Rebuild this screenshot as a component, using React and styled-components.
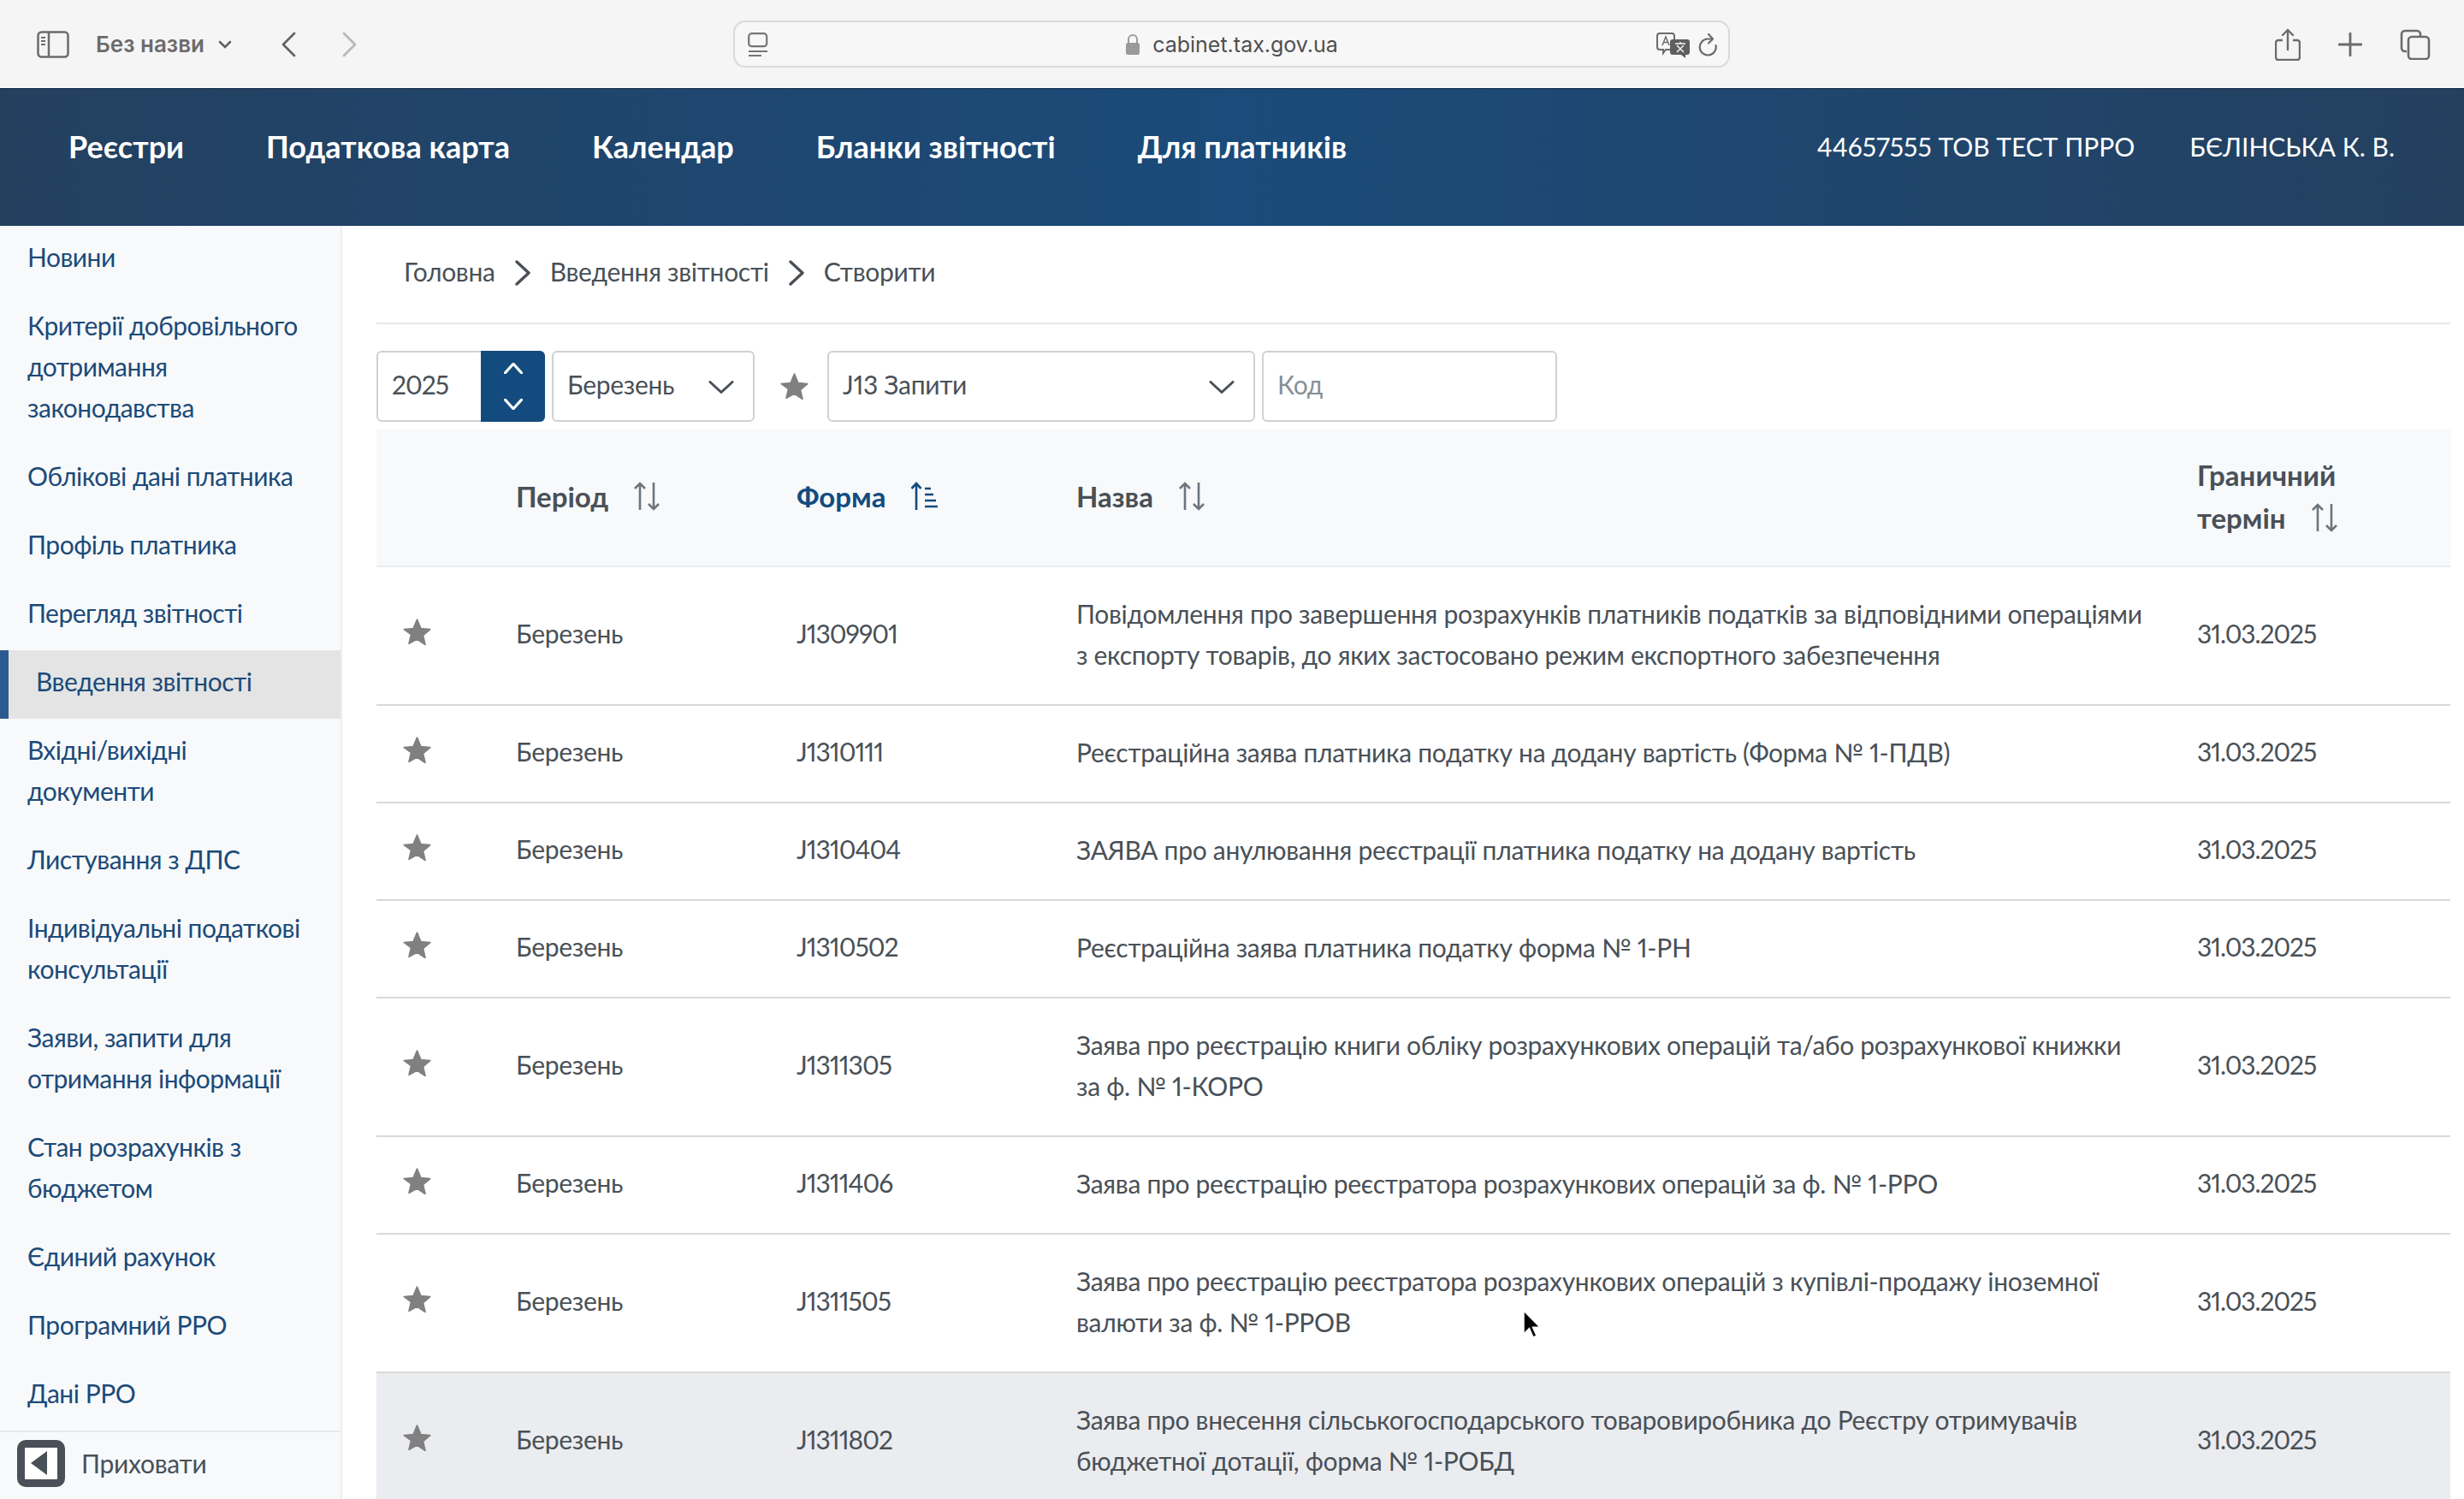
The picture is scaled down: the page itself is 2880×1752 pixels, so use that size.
import React from 'react';
import styled, { createGlobalStyle } from 'styled-components';

const GlobalStyle = createGlobalStyle`
  html, body {
    margin: 0;
    padding: 0;
    background: #fff;
  }
  body {
    font-family: Lato, "Noto Sans", sans-serif;
    color: #495057;
    font-variant-numeric: proportional-nums;
  }
`;

const menuItems = [
  ['Новини'],
  ['Критерії добровільного', 'дотримання', 'законодавства'],
  ['Облікові дані платника'],
  ['Профіль платника'],
  ['Перегляд звітності'],
  ['Введення звітності'],
  ['Вхідні/вихідні', 'документи'],
  ['Листування з ДПС'],
  ['Індивідуальні податкові', 'консультації'],
  ['Заяви, запити для', 'отримання інформації'],
  ['Стан розрахунків з', 'бюджетом'],
  ['Єдиний рахунок'],
  ['Програмний РРО'],
  ['Дані РРО'],
];

const rows = [
  { code: 'J1309901', name: ['Повідомлення про завершення розрахунків платників податків за відповідними операціями', 'з експорту товарів, до яких застосовано режим експортного забезпечення'] },
  { code: 'J1310111', name: ['Реєстраційна заява платника податку на додану вартість (Форма № 1-ПДВ)'] },
  { code: 'J1310404', name: ['ЗАЯВА про анулювання реєстрації платника податку на додану вартість'] },
  { code: 'J1310502', name: ['Реєстраційна заява платника податку форма № 1-РН'] },
  { code: 'J1311305', name: ['Заява про реєстрацію книги обліку розрахункових операцій та/або розрахункової книжки', 'за ф. № 1-КОРО'] },
  { code: 'J1311406', name: ['Заява про реєстрацію реєстратора розрахункових операцій за ф. № 1-РРО'] },
  { code: 'J1311505', name: ['Заява про реєстрацію реєстратора розрахункових операцій з купівлі-продажу іноземної', 'валюти за ф. № 1-РРОВ'] },
  { code: 'J1311802', name: ['Заява про внесення сільськогосподарського товаровиробника до Реєстру отримувачів', 'бюджетної дотації, форма № 1-РОБД'], hovered: true },
];

const Star = ({ className }) => (
  <svg className={className} viewBox="1 1 30 28.500" width="33" height="31">
    <path d="M16 2l4 9.600 10 .9-7.600 6.600 2.300 9.900L16 23l-8.700 5 2.300-9.900L2 12.500l10-.9z" fill="#808080" stroke="#808080" strokeWidth="1.600" strokeLinejoin="round" />
  </svg>
);

const Chevron = ({ up, width = 30, height = 15, color = '#495057', stroke = 3 }) => (
  <svg viewBox="0 0 30 15" width={width} height={height} preserveAspectRatio="none">
    <path d={up ? 'M2 13.500L15 1.500l13 12' : 'M2 1.500l13 12 13-12'} fill="none" stroke={color} strokeWidth={stroke} strokeLinecap="round" strokeLinejoin="round" />
  </svg>
);

const SortIcon = ({ active }) => (
  <svg viewBox="0 0 32 34" width="32" height="34">
    {active ? (
      <g fill="none" stroke="#134b7f" strokeWidth="2.600">
        <path d="M7 33V2M1.500 8L7 2l5.500 6" />
        <path d="M17 8h7M17 15h10M17 22h13M17 29h15" strokeWidth="2.400" />
      </g>
    ) : (
      <g fill="none" stroke="#6c757d" strokeWidth="2.600">
        <path d="M8 33V2M2 8l6-6 6 6" />
        <path d="M24 1v31M18 26l6 6 6-6" />
      </g>
    )}
  </svg>
);

const Page = styled.div`
  position: relative;
  width: 2880px;
  height: 1752px;
  overflow: hidden;
`;

const BrowserBar = styled.div`
  position: relative;
  display: flex;
  align-items: center;
  height: 103px;
  padding-left: 43px;
  background: #f5f5f6;
  border-bottom: 1px solid #0a2340;
`;

const TabTitle = styled.span`
  margin-left: 31px;
  font-family: Inter, "Liberation Sans", sans-serif;
  font-size: 26px;
  font-weight: 600;
  color: #6b6b6b;
`;

const BarButton = styled.span`
  display: flex;
  margin-left: ${props => props.$gap}px;
`;

const UrlBox = styled.div`
  position: absolute;
  left: 857px;
  top: 24px;
  box-sizing: border-box;
  width: 1165px;
  height: 55px;
  display: flex;
  align-items: center;
  justify-content: center;
  border: 2px solid #d9d9d9;
  border-radius: 14px;
  background: #f7f7f8;
`;

const UrlText = styled.span`
  margin-left: 14px;
  font-family: Inter, "Liberation Sans", sans-serif;
  font-size: 25px;
  color: #4f4f4f;
`;

const UrlSide = styled.span`
  position: absolute;
  top: 12px;
  left: ${props => props.$left}px;
  display: flex;
`;

const BarRight = styled.div`
  display: flex;
  align-items: center;
  margin-left: auto;
  padding-right: 39px;
  gap: 44px;
`;

const Header = styled.header`
  display: flex;
  align-items: center;
  justify-content: space-between;
  box-sizing: border-box;
  height: 160px;
  padding: 0 81px 26px 80px;
  background: linear-gradient(90deg, #24405f 0%, #1b4b7a 50%, #24405f 100%);
`;

const Nav = styled.nav`
  display: flex;
  gap: 96px;
`;

const NavLink = styled.a`
  font-size: 36px;
  font-weight: 700;
  color: #fff;
`;

const UserBlock = styled.div`
  display: flex;
  gap: 64px;
  font-size: 30px;
  color: #fff;
`;

const Main = styled.div`
  display: grid;
  grid-template-columns: 400px 1fr;
  height: 1488px;
  font-size: 30px;
  letter-spacing: -0.3px;
`;

const Sidebar = styled.aside`
  position: relative;
  box-sizing: border-box;
  height: 1488px;
  background: #f7f9fb;
  border-right: 2px solid #eceef0;
`;

const MenuItem = styled.a`
  display: block;
  box-sizing: border-box;
  padding: 12px 20px 20px 32px;
  line-height: 48px;
  letter-spacing: -0.5px;
  color: #1c4a78;
  white-space: nowrap;
  ${props => props.$active && `
    background: #e4e4e4;
    border-left: 10px solid #2a5a8f;
  `}
`;

const HideRow = styled.div`
  position: absolute;
  left: 0;
  right: 0;
  top: 1408px;
  height: 80px;
  display: flex;
  align-items: center;
  box-sizing: border-box;
  padding: 0 0 6px 20px;
  gap: 19px;
  color: #495057;
  background: #f7f9fb;
  border-top: 2px solid #e6e8ea;
`;

const HideIcon = styled.span`
  position: relative;
  box-sizing: border-box;
  width: 56px;
  height: 55px;
  border: 9px solid #495057;
  border-radius: 10px;
  background: #fff;
  &::after {
    content: '';
    position: absolute;
    left: 7px;
    top: 4px;
    border-style: solid;
    border-width: 14px 19px 14px 0;
    border-color: transparent #495057 transparent transparent;
  }
`;

const Content = styled.main`
  padding: 0 16px 0 40px;
`;

const Breadcrumbs = styled.div`
  display: flex;
  align-items: center;
  box-sizing: border-box;
  height: 115px;
  padding: 0 0 8px 32px;
  gap: 22px;
  border-bottom: 2px solid #e8e8e8;
`;

const CrumbArrow = styled.svg`
  margin-top: 5px;
`;

const Filters = styled.div`
  display: flex;
  align-items: stretch;
  height: 83px;
  margin-top: 31px;
`;

const Field = styled.div`
  position: relative;
  display: flex;
  align-items: center;
  box-sizing: border-box;
  width: ${props => props.$width}px;
  margin-right: ${props => props.$gap ?? 8}px;
  padding: 0 0 6px 16px;
  color: ${props => (props.$placeholder ? '#868e96' : '#495057')};
  background: #fff;
  border: 2px solid #ced1d6;
  border-radius: 6px;
`;

const YearText = styled.span`
  letter-spacing: -1px;
`;

const Spinner = styled.div`
  position: absolute;
  top: -2px;
  right: -2px;
  bottom: -2px;
  width: 75px;
  display: flex;
  flex-direction: column;
  align-items: center;
  justify-content: space-between;
  padding: 14px 0;
  box-sizing: border-box;
  background: #134b7f;
  border-radius: 0 6px 6px 0;
`;

const SelectArrow = styled.span`
  position: absolute;
  right: 22px;
  top: 33px;
  display: flex;
`;

const FavStar = styled.span`
  display: flex;
  align-items: center;
  width: 85px;
  padding-left: 30px;
  box-sizing: border-box;
`;

const Grid = styled.div`
  display: grid;
  grid-template-columns: 163px 328px 327px 1310px 1fr;
  align-items: center;
  box-sizing: border-box;
  height: ${props => props.$height}px;
  padding-bottom: 6px;
  background: ${props => (props.$hovered ? '#ebecef' : '#fff')};
  border-bottom: 2px solid #d9d9d9;
`;

const HeadRow = styled(Grid)`
  margin-top: 9px;
  padding-bottom: 4px;
  background: #f7f9fb;
  border-bottom-color: #e9ecef;
  font-size: 33px;
  letter-spacing: 0;
  font-weight: 700;
`;

const HeadCell = styled.div`
  display: flex;
  align-items: center;
  gap: 29px;
  line-height: 50px;
  color: ${props => (props.$active ? '#134b7f' : '#495057')};
`;

const HeadStack = styled.div`
  line-height: 50px;
`;

const StarCell = styled.div`
  display: flex;
  padding-left: 31px;
  margin-top: -4px;
`;

const NumberCell = styled.div`
  letter-spacing: ${props => props.$tight}px;
`;

const NameCell = styled.div`
  margin-top: 2px;
  line-height: 48px;
  white-space: nowrap;
`;

const Cursor = styled.svg`
  position: absolute;
  left: 1778px;
  top: 1530px;
`;

const App = () => (
  <Page>
    <GlobalStyle />
    <BrowserBar>
      <svg viewBox="0 0 38 32" width="38" height="32">
        <rect x="1.500" y="1.500" width="35" height="29" rx="4" fill="none" stroke="#6b6b6b" strokeWidth="2.500" />
        <path d="M14 2v28" stroke="#6b6b6b" strokeWidth="2.500" />
        <path d="M5 8h5M5 12h5M5 16h5" stroke="#6b6b6b" strokeWidth="2" />
      </svg>
      <TabTitle>Без назви</TabTitle>
      <BarButton $gap={16}>
        <svg viewBox="0 0 16 10" width="16" height="10"><path d="M2 2l6 6 6-6" fill="none" stroke="#5f5f5f" strokeWidth="2.500" strokeLinecap="round" /></svg>
      </BarButton>
      <BarButton $gap={57}>
        <svg viewBox="0 0 18 30" width="18" height="30"><path d="M16 2L3 15l13 13" fill="none" stroke="#636363" strokeWidth="2.800" strokeLinecap="round" strokeLinejoin="round" /></svg>
      </BarButton>
      <BarButton $gap={54}>
        <svg viewBox="0 0 18 30" width="18" height="30"><path d="M2 2l13 13L2 28" fill="none" stroke="#b9b9b9" strokeWidth="2.800" strokeLinecap="round" strokeLinejoin="round" /></svg>
      </BarButton>
      <UrlBox>
        <UrlSide $left={15}>
          <svg viewBox="0 0 24 30" width="24" height="30">
            <rect x="1.200" y="1.200" width="21" height="15" rx="3.500" fill="none" stroke="#767676" strokeWidth="2.200" />
            <path d="M1 22h22M1 27h15" stroke="#767676" strokeWidth="2.200" />
          </svg>
        </UrlSide>
        <svg viewBox="0 0 18 26" width="18" height="26">
          <path d="M4 12V7a5 5 0 0 1 10 0v5" fill="none" stroke="#9a9a9a" strokeWidth="2" />
          <rect x="1" y="11" width="16" height="14" rx="2.500" fill="#9a9a9a" />
        </svg>
        <UrlText>cabinet.tax.gov.ua</UrlText>
        <UrlSide $left={1077}>
          <svg viewBox="0 0 40 30" width="40" height="30">
            <path d="M4 1h14a3 3 0 0 1 3 3v13a3 3 0 0 1-3 3H11l-3 4v-4H4a3 3 0 0 1-3-3V4a3 3 0 0 1 3-3z" fill="none" stroke="#6b6b6b" strokeWidth="2" />
            <path d="M7 15l4-10 4 10M8.500 11.500h5" fill="none" stroke="#6b6b6b" strokeWidth="1.500" />
            <path d="M19 8h17a3 3 0 0 1 3 3v12a3 3 0 0 1-3 3h-2v4l-5-4h-10a3 3 0 0 1-3-3V11a3 3 0 0 1 3-3z" fill="#5f5f5f" />
            <path d="M22 13h12M28 11v2M24 23l8-8M24 15l8 8" fill="none" stroke="#f5f5f6" strokeWidth="1.500" />
          </svg>
        </UrlSide>
        <UrlSide $left={1125}>
          <svg viewBox="0 0 24 28" width="24" height="28">
            <path d="M19.500 12a9.500 9.500 0 1 1-9.500-7.500h5" transform="translate(2 3)" fill="none" stroke="#6b6b6b" strokeWidth="2.200" strokeLinecap="round" />
            <path d="M13 2l5 5.500-5 5" fill="none" stroke="#6b6b6b" strokeWidth="2.200" strokeLinecap="round" strokeLinejoin="round" />
          </svg>
        </UrlSide>
      </UrlBox>
      <BarRight>
        <svg viewBox="0 0 30 38" width="30" height="38">
          <path d="M9 14H4a3 3 0 0 0-3 3v17a3 3 0 0 0 3 3h22a3 3 0 0 0 3-3V17a3 3 0 0 0-3-3h-5" fill="none" stroke="#6b6b6b" strokeWidth="2.400" />
          <path d="M15 25V2M9 8l6-6 6 6" fill="none" stroke="#6b6b6b" strokeWidth="2.400" strokeLinecap="round" strokeLinejoin="round" />
        </svg>
        <svg viewBox="0 0 28 28" width="28" height="28">
          <path d="M14 1v26M1 14h26" stroke="#6b6b6b" strokeWidth="2.800" strokeLinecap="round" />
        </svg>
        <svg viewBox="0 0 36 36" width="36" height="36">
          <path d="M8 26H6a4 4 0 0 1-4-4V6a4 4 0 0 1 4-4h14a4 4 0 0 1 4 4v2" fill="none" stroke="#6b6b6b" strokeWidth="2.600" />
          <rect x="10" y="9" width="24" height="26" rx="4" fill="none" stroke="#6b6b6b" strokeWidth="2.600" />
        </svg>
      </BarRight>
    </BrowserBar>

    <Header>
      <Nav>
        <NavLink>Реєстри</NavLink>
        <NavLink>Податкова карта</NavLink>
        <NavLink>Календар</NavLink>
        <NavLink>Бланки звітності</NavLink>
        <NavLink>Для платників</NavLink>
      </Nav>
      <UserBlock>
        <span>44657555 ТОВ ТЕСТ ПРРО</span>
        <span>БЄЛІНСЬКА К. В.</span>
      </UserBlock>
    </Header>

    <Main>
      <Sidebar>
        {menuItems.map((lines, index) => (
          <MenuItem key={index} $active={lines[0] === 'Введення звітності'}>
            {lines.map((line, i) => <div key={i}>{line}</div>)}
          </MenuItem>
        ))}
        <HideRow>
          <HideIcon />
          Приховати
        </HideRow>
      </Sidebar>

      <Content>
        <Breadcrumbs>
          <span>Головна</span>
          <CrumbArrow viewBox="0 0 20 30" width="20" height="30"><path d="M3 2l14 13L3 28" fill="none" stroke="#495057" strokeWidth="3.400" strokeLinecap="round" strokeLinejoin="round" /></CrumbArrow>
          <span>Введення звітності</span>
          <CrumbArrow viewBox="0 0 20 30" width="20" height="30"><path d="M3 2l14 13L3 28" fill="none" stroke="#495057" strokeWidth="3.400" strokeLinecap="round" strokeLinejoin="round" /></CrumbArrow>
          <span>Створити</span>
        </Breadcrumbs>

        <Filters>
          <Field $width={197}>
            <YearText>2025</YearText>
            <Spinner>
              <Chevron up width={22} height={13} color="#fff" stroke={4} />
              <Chevron width={22} height={13} color="#fff" stroke={4} />
            </Spinner>
          </Field>
          <Field $width={237} $gap={0}>
            Березень
            <SelectArrow><Chevron /></SelectArrow>
          </Field>
          <FavStar><Star /></FavStar>
          <Field $width={500}>
            J13 Запити
            <SelectArrow><Chevron /></SelectArrow>
          </Field>
          <Field $width={345} $placeholder>Код</Field>
        </Filters>

        <HeadRow $height={161}>
          <div />
          <HeadCell>Період <SortIcon /></HeadCell>
          <HeadCell $active>Форма <SortIcon active /></HeadCell>
          <HeadCell>Назва <SortIcon /></HeadCell>
          <HeadStack>
            Граничний
            <HeadCell>термін <SortIcon /></HeadCell>
          </HeadStack>
        </HeadRow>

        {rows.map(row => (
          <Grid key={row.code} $height={row.name.length > 1 ? 162 : 114} $hovered={row.hovered}>
            <StarCell><Star /></StarCell>
            <div>Березень</div>
            <NumberCell $tight={-1}>{row.code}</NumberCell>
            <NameCell>
              {row.name.map((line, i) => <div key={i}>{line}</div>)}
            </NameCell>
            <NumberCell $tight={-1.1}>31.03.2025</NumberCell>
          </Grid>
        ))}
      </Content>
    </Main>

    <Cursor viewBox="0 0 24 36" width="24" height="36">
      <path d="M3 2v27l6.500-6.500L14 33l4-1.800-4.500-10H22z" fill="#000" stroke="#fff" strokeWidth="1.500" />
    </Cursor>
  </Page>
);

export default App;
